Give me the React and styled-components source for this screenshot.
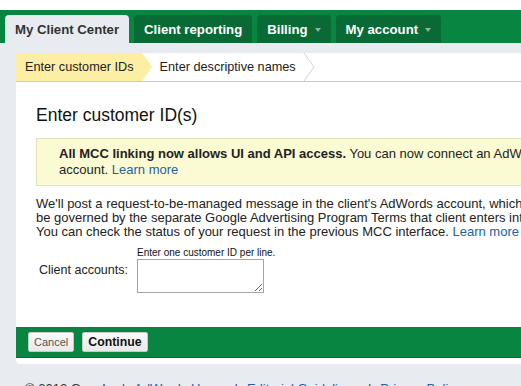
import React from "react";
import styled, { createGlobalStyle } from "styled-components";

const Global = createGlobalStyle`
  html, body {
    margin: 0;
    padding: 0;
    background: #e8ebf0;
    font-family: Arial, "Liberation Sans", sans-serif;
    color: #222;
    overflow: hidden;
  }
`;

const Page = styled.div`
  width: 521px;
  height: 386px;
  overflow: hidden;
  background: #e8ebf0;
`;

const TopStrip = styled.div`
  height: 10px;
  background: #fff;
`;

const TabBar = styled.div`
  display: flex;
  align-items: flex-end;
  gap: 5px;
  height: 33px;
  padding-left: 5px;
  background: #088540;
`;

const Tab = styled.div`
  display: flex;
  align-items: center;
  gap: 7px;
  height: 28px;
  padding: 0 10px;
  border-radius: 4px 4px 0 0;
  background: ${(p) => (p.$active ? "#e8ebf0" : "#0a6a35")};
  color: ${(p) => (p.$active ? "#333" : "#fff")};
  font-size: 13.2px;
  font-weight: bold;
  white-space: nowrap;
`;

const Caret = styled.span`
  width: 0;
  height: 0;
  border-left: 3.5px solid transparent;
  border-right: 3.5px solid transparent;
  border-top: 4px solid #86b89a;
  margin-top: 1px;
`;

const Panel = styled.div`
  width: 900px;
  margin: 10px 0 0 16px;
  background: #fff;
  border-radius: 4px;
`;

const Steps = styled.div`
  display: flex;
  height: 28px;
  border-bottom: 1px solid #c9c9c9;
  background: #fff;
`;

const Step = styled.div`
  position: relative;
  display: flex;
  align-items: center;
  padding: 0 8px 0 ${(p) => (p.$current ? "9px" : "18px")};
  background: ${(p) => (p.$current ? "#fcefa3" : "#fff")};
  font-size: 12.7px;
  color: #222;
  white-space: nowrap;
  z-index: ${(p) => (p.$current ? 2 : 1)};
`;

const Arrow = styled.svg`
  position: absolute;
  top: 0;
  left: 100%;
  width: 11px;
  height: 28px;
  overflow: visible;
`;

const Body = styled.div`
  padding: 23px 0 0 20px;
`;

const Heading = styled.h1`
  margin: 0 0 12px;
  font-size: 17.5px;
  font-weight: normal;
  color: #111;
`;

const Notice = styled.div`
  padding: 7px 0 7px 22px;
  background: #fbfbd3;
  border: 1px solid #e3e2b9;
  border-right: none;
  font-size: 13px;
  line-height: 16px;
  white-space: nowrap;
`;

const Link = styled.a`
  color: #2261a8;
  text-decoration: none;
`;

const Para = styled.p`
  margin: 11px 0 0;
  font-size: 13px;
  line-height: 14px;
  white-space: nowrap;
  color: #222;
`;

const FieldRow = styled.div`
  display: grid;
  grid-template-columns: 101px auto;
  grid-template-rows: auto auto;
  margin-top: 8px;
`;

const Hint = styled.div`
  grid-column: 2;
  font-size: 10px;
  line-height: 12px;
  color: #111;
`;

const Label = styled.label`
  grid-column: 1;
  padding: 4px 0 0 3px;
  font-size: 12.5px;
  color: #222;
`;

const Area = styled.textarea`
  grid-column: 2;
  box-sizing: border-box;
  width: 127px;
  height: 34px;
  margin: 0;
  border: 1px solid #a5a5a5;
  resize: both;
  font-family: inherit;
`;

const ActionBar = styled.div`
  display: flex;
  gap: 8px;
  align-items: center;
  height: 30px;
  margin-top: 34px;
  padding-left: 12px;
  background: #088540;
  border-bottom: 1px solid #0c6a36;
`;

const Button = styled.button`
  height: 20px;
  padding: 0 5px;
  border: 1px solid #c8c8c8;
  border-radius: 2px;
  background: linear-gradient(#fafafa, #e9e9e9);
  font-family: Arial, "Liberation Sans", sans-serif;
  font-size: ${(p) => (p.$primary ? "12.3px" : "11px")};
  font-weight: ${(p) => (p.$primary ? "bold" : "normal")};
  color: ${(p) => (p.$primary ? "#111" : "#555")};
`;

const PanelFoot = styled.div`
  height: 6px;
`;

const Footer = styled.div`
  padding: 17px 0 0 25px;
  font-size: 13px;
  color: #333;
  white-space: nowrap;
  display: flex;
  gap: 9px;
`;

const Sep = styled.span`
  color: #444;
`;

function Crumb({ current, children }) {
  return (
    <Step $current={current}>
      {children}
      <Arrow viewBox="0 0 11 28">
        {current ? (
          <polygon points="0,0 10,14 0,28" fill="#fcefa3" />
        ) : (
          <polyline points="0,0 10,14 0,28" fill="#fff" stroke="#d2d2d2" strokeWidth="1" />
        )}
      </Arrow>
    </Step>
  );
}

export default function App() {
  return (
    <Page>
      <Global />
      <TopStrip />
      <TabBar>
        <Tab $active>My Client Center</Tab>
        <Tab>Client reporting</Tab>
        <Tab>
          Billing <Caret />
        </Tab>
        <Tab>
          My account <Caret />
        </Tab>
      </TabBar>
      <Panel>
        <Steps>
          <Crumb current>Enter customer IDs</Crumb>
          <Crumb>Enter descriptive names</Crumb>
        </Steps>
        <Body>
          <Heading>Enter customer ID(s)</Heading>
          <Notice>
            <b>All MCC linking now allows UI and API access.</b> You can now connect an AdWords
            <br />
            account. <Link href="#">Learn more</Link>
          </Notice>
          <Para>
            We'll post a request-to-be-managed message in the client's AdWords account, which will
            <br />
            be governed by the separate Google Advertising Program Terms that client enters into.
            <br />
            You can check the status of your request in the previous MCC interface.{" "}
            <Link href="#">Learn more</Link>
          </Para>
          <FieldRow>
            <Hint>Enter one customer ID per line.</Hint>
            <Label>Client accounts:</Label>
            <Area />
          </FieldRow>
        </Body>
        <ActionBar>
          <Button>Cancel</Button>
          <Button $primary>Continue</Button>
        </ActionBar>
        <PanelFoot />
      </Panel>
      <Footer>
        <span>© 2012 Google</span>
        <Sep>|</Sep>
        <Link href="#">AdWords Home</Link>
        <Sep>|</Sep>
        <Link href="#">Editorial Guidelines</Link>
        <Sep>|</Sep>
        <Link href="#">Privacy Policy</Link>
      </Footer>
    </Page>
  );
}
